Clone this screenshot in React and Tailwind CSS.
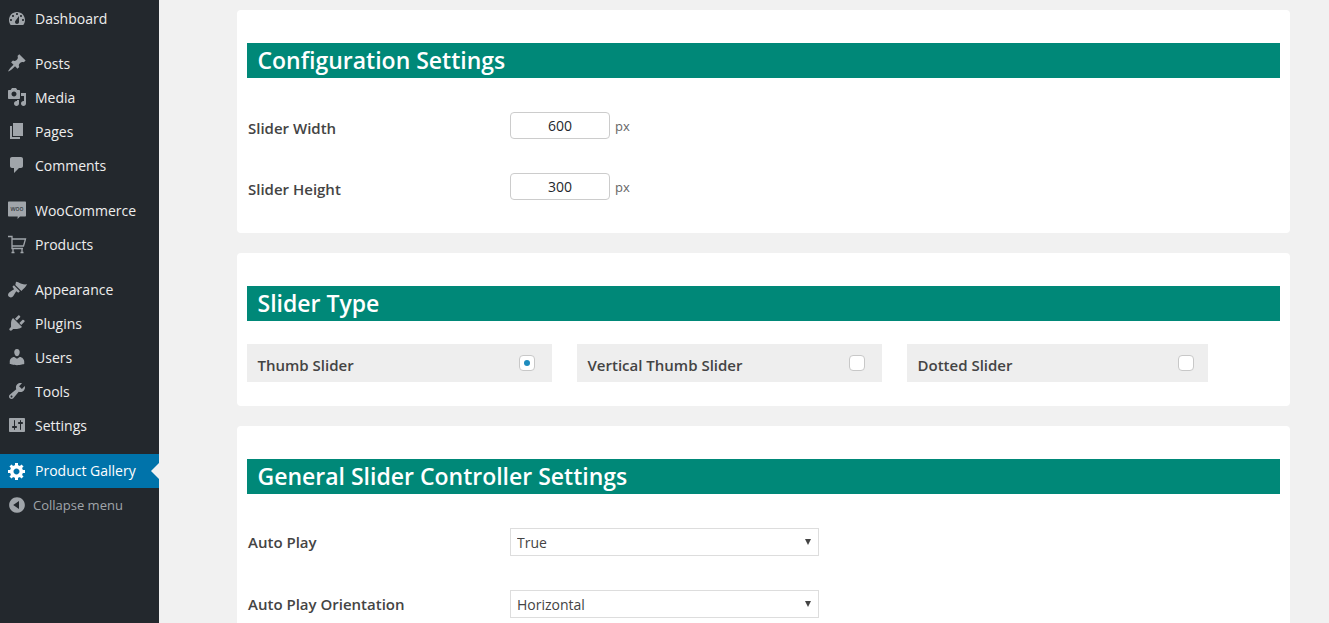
const I = {
  dashboard: "M3.76 16h12.48c1.1-1.37 1.76-3.11 1.76-5 0-4.42-3.58-8-8-8s-8 3.58-8 8c0 1.89.66 3.63 1.76 5zM10 4c.55 0 1 .45 1 1s-.45 1-1 1-1-.45-1-1 .45-1 1-1zM6 6c.55 0 1 .45 1 1s-.45 1-1 1-1-.45-1-1 .45-1 1-1zm8 0c.55 0 1 .45 1 1s-.45 1-1 1-1-.45-1-1 .45-1 1-1zm-5.37 5.55L12 7v6c0 1.1-.9 2-2 2s-2-.9-2-2c0-.57.24-1.08.63-1.45zM4 10c.55 0 1 .45 1 1s-.45 1-1 1-1-.45-1-1 .45-1 1-1zm12 0c.55 0 1 .45 1 1s-.45 1-1 1-1-.45-1-1 .45-1 1-1z",
  post: "M10.44 3.02l1.82-1.82 6.36 6.35-1.83 1.82c-1.05-.68-2.48-.57-3.41.36l-.75.75c-.92.93-1.04 2.35-.35 3.41l-1.83 1.82-2.41-2.41-2.8 2.79c-.42.42-3.38 2.71-3.8 2.29s1.86-3.39 2.28-3.81l2.79-2.79L4.1 9.36l1.83-1.82c1.05.69 2.48.57 3.4-.36l.75-.75c.93-.92 1.05-2.35.36-3.41z",
  media: "M13 11V4c0-.55-.45-1-1-1h-1.67L9 1H5L3.67 3H2c-.55 0-1 .45-1 1v7c0 .55.45 1 1 1h10c.55 0 1-.45 1-1zM7 4.5c1.38 0 2.5 1.12 2.5 2.5S8.38 9.5 7 9.5 4.5 8.38 4.5 7 5.62 4.5 7 4.5zM14 6h5v10.5c0 1.38-1.12 2.5-2.5 2.5S14 17.88 14 16.5s1.12-2.5 2.5-2.5c.17 0 .34.02.5.05V9h-3V6zm-4 8.05V13h2v3.5c0 1.38-1.12 2.5-2.5 2.5S7 17.88 7 16.5 8.12 14 9.5 14c.17 0 .34.02.5.05z",
  page: "M6 15V2h10v13H6zm-1 1h8v2H3V5h2v11z",
  comments: "M5 2h9c1.1 0 2 .9 2 2v7c0 1.1-.9 2-2 2h-2l-5 5v-5H5c-1.1 0-2-.9-2-2V4c0-1.1.9-2 2-2z",
  appearance: "M9 2.8c2 .2 3.5 1.2 5.5 2 2 .7 3.7.8 5.5.5-.9 2.2-3.4 4.6-5.6 6.7L8.3 5.9zM6.9 6.3l6 6-1.6 1.4-2-1.4c-1.2 1.6-2 3.6-3.4 5.1-1.3 1.3-3.2 1.3-4.2.2-1-1.1-.8-2.9.5-4.1 1.5-1.3 3.3-2.2 4.9-3.3L5.4 7.8z",
  plugins: "M13.11 4.36L9.87 7.6 8 5.73l3.24-3.24c.35-.34 1.05-.2 1.56.32.52.51.66 1.21.31 1.55zm-8 1.77l.91-1.12 9.01 9.01-1.19.84c-.71.71-2.63 1.16-3.82 1.16H6.14L4.9 17.26c-.59.59-1.54.59-2.12 0-.59-.58-.59-1.53 0-2.12l1.24-1.24v-3.88c0-1.13.4-3.19 1.09-3.89zm7.26 3.97l3.24-3.24c.34-.35 1.04-.21 1.55.31.52.51.66 1.21.31 1.55l-3.24 3.25z",
  users: "M10 9.25c-2.27 0-2.73-3.44-2.73-3.44C7 4.02 7.82 2 9.97 2c2.16 0 2.98 2.02 2.71 3.81 0 0-.41 3.44-2.68 3.44zm0 2.57L12.72 10c2.39 0 4.52 2.33 4.52 4.53v2.49s-3.65 1.13-7.24 1.13c-3.65 0-7.24-1.13-7.24-1.13v-2.49c0-2.25 1.94-4.48 4.47-4.48z",
  tools: "M16.68 9.77c-1.34 1.34-3.3 1.67-4.95.99l-5.41 6.52c-.99.99-2.59.99-3.58 0s-.99-2.59 0-3.57l6.52-5.42c-.68-1.65-.35-3.61.99-4.95 1.28-1.28 3.12-1.62 4.72-1.06l-2.89 2.89 2.82 2.82 2.86-2.87c.53 1.58.18 3.39-1.08 4.65zM3.81 16.21c.4.39 1.04.39 1.43 0 .4-.4.4-1.04 0-1.43-.39-.4-1.03-.4-1.43 0-.39.39-.39 1.03 0 1.43z",
  settings: "M18 16V4c0-.55-.45-1-1-1H3c-.55 0-1 .45-1 1v12c0 .55.45 1 1 1h14c.55 0 1-.45 1-1zM8 11h1c.55 0 1 .45 1 1s-.45 1-1 1H8v1.5c0 .28-.22.5-.5.5s-.5-.22-.5-.5V13H6c-.55 0-1-.45-1-1s.45-1 1-1h1V5.5c0-.28.22-.5.5-.5s.5.22.5.5V11zm5-2h-1c-.55 0-1-.45-1-1s.45-1 1-1h1V5.5c0-.28.22-.5.5-.5s.5.22.5.5V7h1c.55 0 1 .45 1 1s-.45 1-1 1h-1v5.5c0 .28-.22.5-.5.5s-.5-.22-.5-.5V9z",
  gear: "M18 12h-2.18c-.17.7-.44 1.35-.81 1.93l1.54 1.54-2.1 2.1-1.54-1.54c-.58.36-1.23.63-1.91.79V19H8v-2.18c-.68-.16-1.33-.43-1.91-.79l-1.54 1.54-2.12-2.12 1.54-1.54c-.36-.58-.63-1.23-.79-1.91H1V9.03h2.17c.16-.7.44-1.35.8-1.94L2.43 5.55l2.1-2.1 1.54 1.54c.58-.37 1.24-.64 1.93-.81V2h3v2.18c.68.16 1.33.43 1.91.79l1.54-1.54 2.12 2.12-1.54 1.54c.36.59.64 1.24.8 1.94H18V12zm-8.5 1.5c1.66 0 3-1.34 3-3s-1.34-3-3-3-3 1.34-3 3 1.34 3 3 3z",
  collapse: "M10 2.16c4.33 0 7.84 3.51 7.84 7.84s-3.51 7.84-7.84 7.84S2.16 14.33 2.16 10 5.71 2.16 10 2.16zm2 11.72V6.12L6.18 9.97z",
};

function Icon({ name, white }) {
  return (
    <svg viewBox="0 0 20 20" className="w-5 h-5 shrink-0" fill={white ? "#ffffff" : "#a0a5aa"}>
      <path d={I[name]} />
    </svg>
  );
}

function WooIcon() {
  return (
    <svg viewBox="0 0 20 20" className="w-5 h-5 shrink-0">
      <path fill="#a0a5aa" d="M2 1.5h16c.6 0 1 .4 1 1v13c0 .6-.4 1-1 1h-5l-2.5 2.5.2-2.5H2c-.6 0-1-.4-1-1v-13c0-.6.4-1 1-1z" />
      <text x="10" y="11" textAnchor="middle" fontSize="6.5" fontFamily="Open Sans, sans-serif" fill="#23282d">woo</text>
    </svg>
  );
}

function CartIcon() {
  return (
    <svg viewBox="0 0 20 20" className="w-5 h-5 shrink-0" fill="none" stroke="#a0a5aa" strokeWidth="1.3">
      <path d="M1 2.5h4v12h11M5 5h13.5l-2 7H5" />
      <path d="M6 15v3.5M15 15v3.5M4.5 18.5h3M13.5 18.5h3" />
    </svg>
  );
}

function Item({ children, label, className = "", textClass = "" }) {
  return (
    <div className={`flex h-[34px] items-center pl-[7px] text-[14px] text-[#eeeeee] ${className}`}>
      {children}
      <span className={`ml-2 ${textClass}`}>{label}</span>
    </div>
  );
}

function Sidebar() {
  return (
    <aside className="w-[159px] shrink-0 bg-[#23282d] pt-[2px]">
      <Item label="Dashboard" textClass="mb-[2px]"><Icon name="dashboard" /></Item>
      <div className="h-[10px]" />
      <Item label="Posts"><Icon name="post" /></Item>
      <Item label="Media"><Icon name="media" /></Item>
      <Item label="Pages"><Icon name="page" /></Item>
      <Item label="Comments"><Icon name="comments" /></Item>
      <div className="h-[11px]" />
      <Item label="WooCommerce"><WooIcon /></Item>
      <Item label="Products"><CartIcon /></Item>
      <div className="h-[11px]" />
      <Item label="Appearance"><Icon name="appearance" /></Item>
      <Item label="Plugins"><Icon name="plugins" /></Item>
      <Item label="Users"><Icon name="users" /></Item>
      <Item label="Tools"><Icon name="tools" /></Item>
      <Item label="Settings"><Icon name="settings" /></Item>
      <div className="h-[12px]" />
      <div className="relative">
        <Item label="Product Gallery" textClass="mb-[2px]" className="bg-[#0073aa] text-white"><Icon name="gear" white /></Item>
        <div className="absolute right-0 top-[9px] h-0 w-0 border-y-[8px] border-r-[8px] border-y-transparent border-r-[#f1f1f1]" />
      </div>
      <div className="flex h-[34px] items-center pl-[7px] text-[13px] text-[#a0a5aa]">
        <Icon name="collapse" />
        <span className="ml-[6px] mt-[2px]">Collapse menu</span>
      </div>
    </aside>
  );
}

function Header({ children }) {
  return (
    <h2 className="flex h-[35px] items-center bg-[#008878] px-[10.5px] pb-[1px] text-[23px] font-semibold text-white">
      {children}
    </h2>
  );
}

function Label({ children, className = "" }) {
  return <div className={`w-[263px] shrink-0 pl-[1px] text-[15px] font-semibold text-[#444444] ${className}`}>{children}</div>;
}

function SizeRow({ label, value, className = "" }) {
  return (
    <div className={`flex h-[27px] items-center ${className}`}>
      <Label className="mt-[5px]">{label}</Label>
      <input
        readOnly
        value={value}
        className="h-[27px] w-[100px] rounded-[4px] border border-[#cccccc] bg-white pb-[1px] text-center text-[14px] text-[#23282d] outline-none"
      />
      <span className="ml-[5px] mt-[3px] text-[13px] text-[#666666]">px</span>
    </div>
  );
}

function TypeBox({ label, checked, wide = true }) {
  return (
    <div className={`flex h-[38px] items-center justify-between bg-[#eeeeee] pl-[10.5px] text-[15px] font-semibold text-[#444444] ${wide ? "w-[305px] pr-[17px]" : "w-[301px] pr-[14px]"}`}>
      <span className="mt-[5px]">{label}</span>
      <span className="flex h-4 w-4 items-center justify-center rounded-[4px] border border-[#c8c8c8] bg-white">
        {checked && <span className="h-[6px] w-[6px] rounded-full bg-[#1e8cbe]" />}
      </span>
    </div>
  );
}

function SelectRow({ label, value, className = "" }) {
  return (
    <div className={`flex h-[28px] items-center ${className}`}>
      <Label>{label}</Label>
      <div className="relative w-[309px]">
        <select
          defaultValue={value}
          className="block h-[28px] w-full appearance-none border border-[#dddddd] bg-white pl-[6px] text-[14px] text-[#444444] outline-none"
        >
          <option>{value}</option>
        </select>
        <svg viewBox="0 0 6 6" className="pointer-events-none absolute right-[8px] top-[11px] h-[6px] w-[6px]">
          <path d="M0 0h6L3 6z" fill="#444444" />
        </svg>
      </div>
    </div>
  );
}

export default function App() {
  return (
    <div className="flex h-[623px] w-[1329px] overflow-hidden bg-[#f1f1f1] font-['Open_Sans',sans-serif]">
      <Sidebar />
      <main className="flex-1 pl-[78px] pr-[39px] pt-[10px]">
        <section className="mb-[20px] h-[223px] rounded-[4px] bg-white px-[10px] pt-[33px]">
          <Header>Configuration Settings</Header>
          <SizeRow label="Slider Width" value="600" className="mt-[34px]" />
          <SizeRow label="Slider Height" value="300" className="mt-[34px]" />
        </section>
        <section className="mb-[20px] h-[153px] rounded-[4px] bg-white px-[10px] pt-[33px]">
          <Header>Slider Type</Header>
          <div className="mt-[23px] flex gap-[25px]">
            <TypeBox label="Thumb Slider" checked />
            <TypeBox label="Vertical Thumb Slider" />
            <TypeBox label="Dotted Slider" wide={false} />
          </div>
        </section>
        <section className="h-[300px] rounded-[4px] bg-white px-[10px] pt-[33px]">
          <Header>General Slider Controller Settings</Header>
          <SelectRow label="Auto Play" value="True" className="mt-[34px]" />
          <SelectRow label="Auto Play Orientation" value="Horizontal" className="mt-[34px]" />
        </section>
      </main>
    </div>
  );
}
